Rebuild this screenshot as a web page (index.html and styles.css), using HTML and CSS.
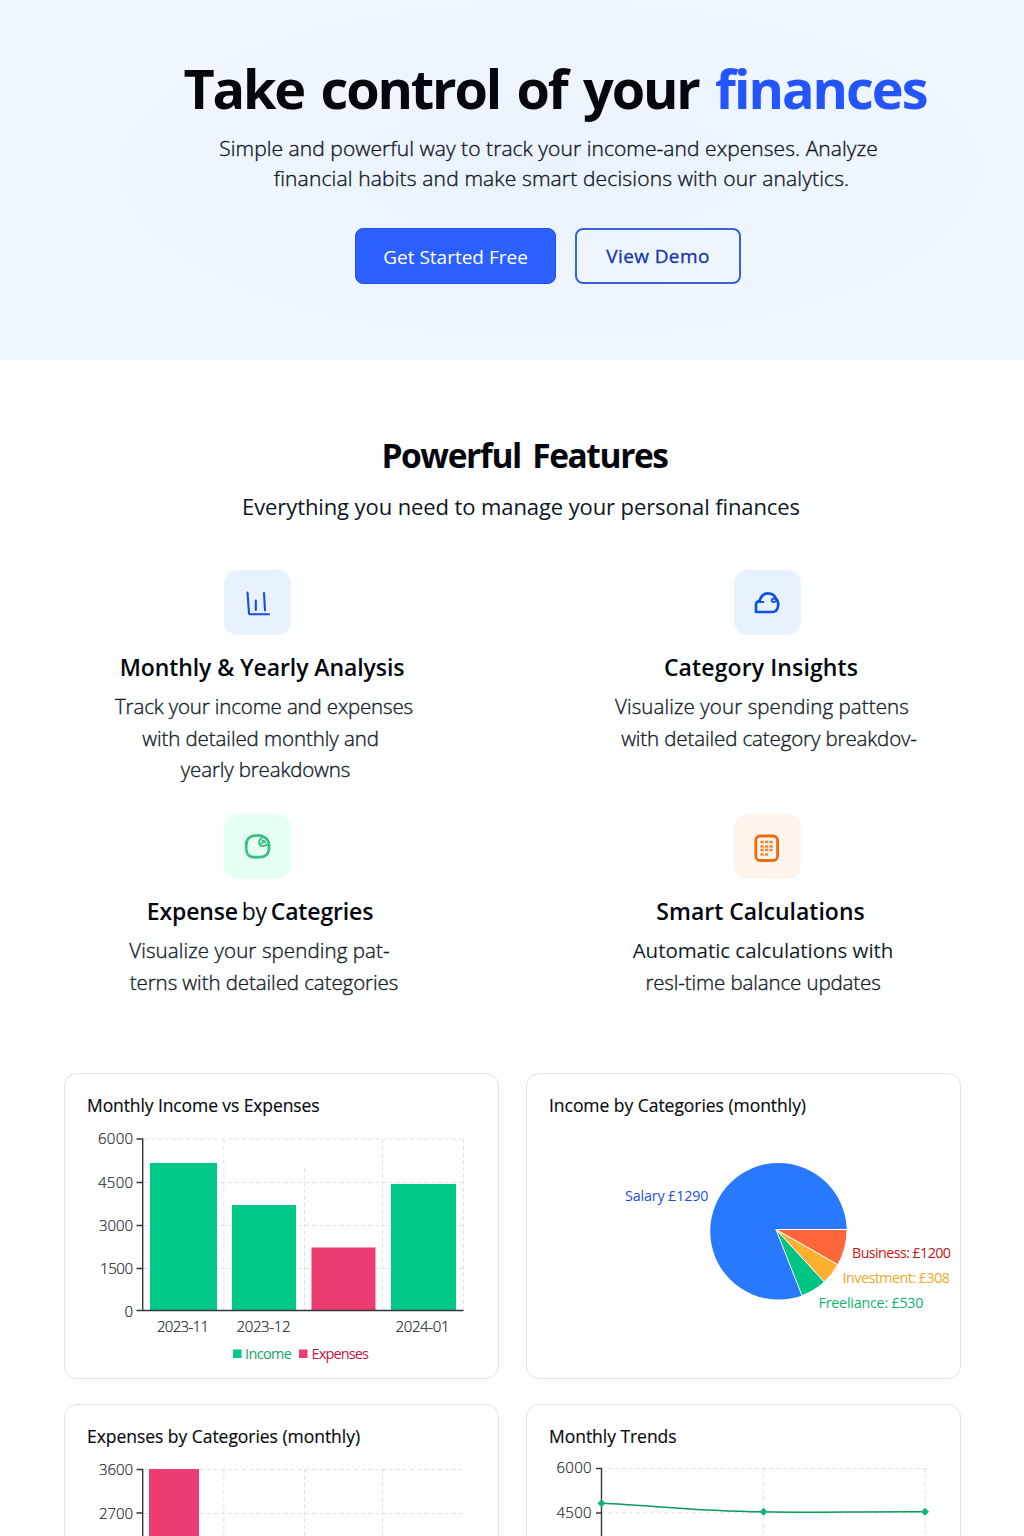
FILE: index.html
```html
<!DOCTYPE html>
<html lang="en">
<head>
<meta charset="utf-8">
<title>Take control of your finances</title>
<link rel="stylesheet" href="styles.css">
</head>
<body>
<section class="hero">
  <h1 class="hero-title">Take control of your <span class="accent">finances</span></h1>
  <p class="hero-text">
    <span class="line hero-l1">Simple and powerful way to track your income-and expenses. Analyze</span>
    <span class="line hero-l2">financial habits and make smart decisions with our analytics.</span>
  </p>
  <div class="actions">
    <a class="btn primary">Get Started Free</a>
    <a class="btn outline">View Demo</a>
  </div>
</section>

<section class="features">
  <h2 class="section-title">Powerful Features</h2>
  <p class="section-text">Everything you need to manage your personal finances</p>
  <div class="feature-grid">
    <article class="feature left">
      <div class="tile blue">
        <svg width="67" height="65" viewBox="224 570 67 65" fill="none" stroke="#1450dc" stroke-width="2.100" stroke-linecap="round" stroke-linejoin="round"><path d="M247.500 592.500 249 613.500Q249 614.200 250 614.200H269M255.800 600.500V610M264 593 265 610.500"/></svg>
      </div>
      <h3 class="feature-title">Monthly &amp; Yearly Analysis</h3>
      <p class="feature-text">
        <span class="line t1">Track your income and expenses</span>
        <span class="line t2">with detailed monthly and</span>
        <span class="line t3">yearly breakdowns</span>
      </p>
    </article>
    <article class="feature right">
      <div class="tile blue">
        <svg width="67" height="65" viewBox="734 570 67 65" fill="none" stroke="#0f52e0" stroke-width="2.700" stroke-linecap="round" stroke-linejoin="round"><path d="M756 612V604.500Q756 601.500 759.500 601C761 595.500 764 593.300 768 593.300C772.500 593.300 774.800 595.500 776 598.500C780 602 778.500 611.800 772.500 612Z"/><path d="M759 602H763.500M775.500 599C771.500 597.500 770.500 601 773 602.200L777 601" stroke-width="1.900"/></svg>
      </div>
      <h3 class="feature-title ct">Category Insights</h3>
      <p class="feature-text">
        <span class="line c1">Visualize your spending pattens</span>
        <span class="line c2">with detailed category breakdov-</span>
      </p>
    </article>
    <article class="feature left">
      <div class="tile green">
        <svg width="67" height="65" viewBox="224 814 67 65" fill="none" stroke="#38bd82" stroke-width="2.700" stroke-linecap="round" stroke-linejoin="round"><path d="M257 835.500C263.500 835 269 839 269 845.500V848C269 854 265.500 857.200 260 857.200H254.500C249 857.200 246.200 853.500 246.200 848.500V845C246.200 838.500 250.500 835.500 257 835.500Z"/><path d="M262 837.800C257.500 840.500 258.500 846 262.500 846.200C265 846.200 266 844.500 268.500 844.500M262.500 840.500 265.500 842.500M261.500 843.500 264.500 841" stroke-width="1.800"/></svg>
      </div>
      <h3 class="feature-title et">Expense <span class="thin">by</span> Categries</h3>
      <p class="feature-text">
        <span class="line e1">Visualize your spending pat-</span>
        <span class="line e2">terns with detailed categories</span>
      </p>
    </article>
    <article class="feature right">
      <div class="tile orange">
        <svg width="67" height="65" viewBox="734 814 67 65" fill="none" stroke="#ec6a10"><rect x="755.800" y="836" width="21.800" height="24.500" rx="4.500" stroke-width="2.800"/><path d="M760.500 842H773.500M760.500 846.500H773.500M760.500 850H772.500M760.500 854.500H768.500" stroke-width="2.500" stroke-dasharray="3.300 1.200" opacity=".8"/></svg>
      </div>
      <h3 class="feature-title st">Smart Calculations</h3>
      <p class="feature-text">
        <span class="line s1">Automatic calculations with</span>
        <span class="line s2">resl-time balance updates</span>
      </p>
    </article>
  </div>
</section>

<section class="charts">
  <article class="card">
    <h4 class="card-title k1">Monthly Income vs Expenses</h4>
    <svg class="chart" viewBox="65 1124 432 254">
      <path class="grid" d="M144 1139H464M144 1182.500H464M144 1225.500H464M144 1268.500H464M223.800 1139V1310M304.500 1168V1310M382.500 1139V1310M463.500 1139V1310"/>
      <g class="income"><path d="M150 1163h67v147h-67zM232 1205h64v105h-64zM391 1184h65v126h-65z"/></g>
      <path class="expense" d="M311.500 1247.500h64v62.500h-64z"/>
      <path class="axis" d="M136.500 1139H142.700V1310.500M136.500 1182.500h6M136.500 1225.500h6M136.500 1268.500h6M136.500 1310.500H463.500"/>
      <g class="tick" text-anchor="end">
        <text x="133" y="1144" textLength="35">6000</text><text x="133" y="1187.500" textLength="35">4500</text><text x="133" y="1231" textLength="34">3000</text><text x="133" y="1274" textLength="33">1500</text><text x="133" y="1317">0</text>
      </g>
      <g class="tick">
        <text x="157" y="1332" textLength="52">2023-11</text><text x="236.500" y="1332" textLength="54">2023-12</text><text x="395.500" y="1332" textLength="54">2024-01</text>
      </g>
      <rect class="income" x="233" y="1349.500" width="8.500" height="8.500"/><text class="legend green-text" x="245" y="1359" textLength="47">Income</text>
      <rect class="expense" x="299" y="1349.500" width="8.500" height="8.500"/><text class="legend red-text" x="311.500" y="1359" textLength="57.500">Expenses</text>
    </svg>
  </article>
  <article class="card">
    <h4 class="card-title k2">Income by Categories (monthly)</h4>
    <svg class="chart" viewBox="527 1124 432 254">
      <circle cx="778.500" cy="1231.300" r="68.300" fill="#2979ff"/>
      <g stroke="#fff" stroke-width="1" stroke-linejoin="round">
        <path d="M776 1229.500H847A68.500 68.500 0 0 1 837.700 1264.700Z" fill="#ff6639"/>
        <path d="M776 1229.500 837.700 1264.700A68.500 68.500 0 0 1 824.300 1282Z" fill="#ffb02e"/>
        <path d="M776 1229.500 824.300 1282A68.500 68.500 0 0 1 802 1295.600Z" fill="#00c481"/>
      </g>
      <g class="pie-label">
        <text x="625" y="1201" textLength="83.500" fill="#1d50d8">Salary £1290</text>
        <text x="852" y="1257.500" textLength="99" fill="#c81414">Business: £1200</text>
        <text x="842.500" y="1283" textLength="107.500" fill="#f0a828">Investment: £308</text>
        <text x="818.500" y="1308" textLength="105" fill="#10b46c">Freeliance: £530</text>
      </g>
    </svg>
  </article>
  <article class="card">
    <h4 class="card-title k3">Expenses by Categories (monthly)</h4>
    <svg class="chart" viewBox="65 1455 432 254">
      <path class="grid" d="M144 1469.500H464M144 1513.500H464M223.800 1469V1640M304.500 1469V1640M382.500 1469V1640"/>
      <path class="expense" d="M149 1469h50v172h-50z"/>
      <path class="axis" d="M136.500 1469.500H142.700V1641M136.500 1513H142.500"/>
      <g class="tick" text-anchor="end"><text x="133" y="1475" textLength="34">3600</text><text x="133" y="1519" textLength="34">2700</text></g>
    </svg>
  </article>
  <article class="card">
    <h4 class="card-title k4">Monthly Trends</h4>
    <svg class="chart" viewBox="527 1455 432 254">
      <path class="grid" d="M608 1468.500H927M608 1512.800H925M763.300 1468V1640M925 1468V1640"/>
      <path class="axis" d="M596 1468.500H601.500V1641M596 1513H601.500"/>
      <path d="M601.500 1503.300C650 1505 690 1511 763.500 1511.800C810 1513 850 1511.500 925 1511.800" fill="none" stroke="#0a9a5c" stroke-width="1.500"/>
      <path d="M601.500 1499.300l4 4-4 4-4-4zM763.500 1507.800l4 4-4 4-4-4zM925 1507.800l4 4-4 4-4-4z" fill="#10b47a"/>
      <g class="tick" text-anchor="end"><text x="591.500" y="1473" textLength="35">6000</text><text x="591.500" y="1518" textLength="35">4500</text></g>
    </svg>
  </article>
</section>
</body>
</html>
```
FILE: styles.css
```css
* { box-sizing: border-box; margin: 0; padding: 0; }
html { overflow: hidden; }
body {
  width: 1024px;
  height: 1536px;
  overflow: hidden;
  background: #fdfefe;
  color: #05070d;
  font-family: "Open Sans", "Noto Sans", sans-serif;
}
.line { display: block; white-space: nowrap; }

.hero {
  height: 360px;
  padding-top: 58px;
  background: radial-gradient(ellipse 460px 180px at 550px 170px, #eaf2fe, #f0f7ff);
  text-align: center;
}
.hero-title {
  padding-left: 86px;
  font-size: 54px;
  line-height: 60px;
  font-weight: 700;
  letter-spacing: -2.15px;
  word-spacing: 4.6px;
  white-space: nowrap;
}
.accent { color: #2454fb; letter-spacing: -2px; }
.hero-text {
  margin-top: 15px;
  font-size: 21px;
  line-height: 30px;
  font-weight: 300;
  color: #10151f;
  -webkit-text-stroke: .35px #10151f;
}
.hero-l1 { padding-left: 73px; letter-spacing: .06px; }
.hero-l2 { padding-left: 99px; letter-spacing: .15px; }
.actions {
  display: flex;
  justify-content: center;
  gap: 19px;
  margin-top: 34.5px;
  padding-left: 72px;
}
.btn {
  display: flex;
  align-items: center;
  justify-content: center;
  height: 56px;
  border-radius: 8px;
  font-size: 19px;
}
.primary { width: 201px; padding-top: 2px; background: #2b60ff; border: 1px solid #1f50ee; color: #fff; }
.outline { width: 166px; border: 2px solid #3a62d8; color: #1534a6; letter-spacing: .4px; -webkit-text-stroke: .3px #1534a6; }

.features { height: 713px; padding-top: 72px; text-align: center; }
.section-title { padding-left: 25px; font-size: 33.5px; line-height: 46px; letter-spacing: -1.4px; word-spacing: 4px; }
.section-text { margin-top: 13px; padding-left: 18px; font-size: 22px; line-height: 30px; letter-spacing: -.1px; color: #101624; }
.feature-grid {
  display: grid;
  grid-template-columns: 420px 420px;
  grid-auto-rows: 244px;
  column-gap: 80px;
  margin: 49px 0 0 52px;
}
.feature { display: flex; flex-direction: column; align-items: center; }
.tile { width: 67px; height: 65px; border-radius: 14px; }
.tile svg { display: block; }
.left .tile { margin-right: 9px; }
.right .tile { margin-left: 11px; }
.blue { background: #e8f2ff; }
.green { background: #e6fff3; }
.orange { background: #fff4eb; }
.feature-title { margin-top: 16px; font-size: 23px; line-height: 32px; font-weight: 600; letter-spacing: -.08px; white-space: nowrap; }
.ct { letter-spacing: .12px; padding-right: 2px; }
.et { padding-right: 4px; letter-spacing: -.15px; word-spacing: -2px; }
.st { padding-right: 3px; letter-spacing: 0; }
.thin { font-weight: 400; letter-spacing: -.2px; }
.feature-text {
  margin-top: 8px;
  font-size: 20.5px;
  line-height: 31.5px;
  font-weight: 300;
  color: #141c28;
  -webkit-text-stroke: .35px #141c28;
}
.t1 { padding-left: 4px; letter-spacing: -.15px; }
.t2 { padding-right: 3px; letter-spacing: -.08px; }
.t3 { padding-left: 7px; letter-spacing: -.15px; }
.c1 { letter-spacing: .1px; }
.c2 { padding-left: 14px; letter-spacing: -.12px; }
.e1 { padding-right: 5px; letter-spacing: .1px; }
.e2 { padding-left: 4px; letter-spacing: -.08px; }
.s1 { padding-left: 2px; font-weight: 400; letter-spacing: -.05px; -webkit-text-stroke: 0; }
.s2 { padding-left: 2px; letter-spacing: -.12px; }

.charts {
  display: grid;
  grid-template-columns: 435px 435px;
  grid-auto-rows: 306px;
  gap: 25px 27px;
  margin-left: 64px;
}
.card { border: 1px solid #e1e4e6; border-radius: 13px; background: #fff; }
.card-title { height: 50px; padding: 19px 0 0 22px; font-size: 17.5px; line-height: 25px; font-weight: 400; color: #07090d; -webkit-text-stroke: .15px #07090d; white-space: nowrap; }
.k1 { letter-spacing: -.1px; }
.k2, .k3, .k4 { letter-spacing: -.04px; }
.chart { display: block; width: 432px; height: 254px; }
.grid { fill: none; stroke: #dfe2e4; stroke-dasharray: 4 3; }
.axis { fill: none; stroke: #33373d; stroke-width: 1.4; }
.income { fill: #00c888; }
.expense { fill: #ee3d72; }
.tick { font-size: 15px; font-weight: 300; fill: #20262e; stroke: #20262e; stroke-width: .2px; }
.legend { font-size: 14.5px; }
.green-text { fill: #10a860; }
.red-text { fill: #b8183c; }
.pie-label { font-size: 14.3px; }
```
